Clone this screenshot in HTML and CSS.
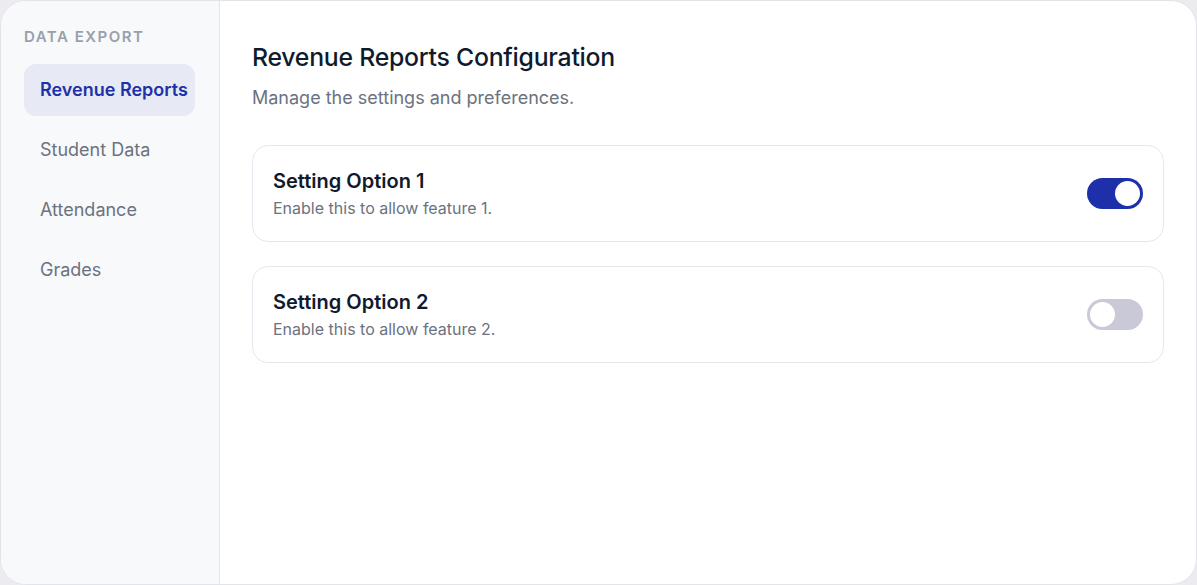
FILE: index.html
```html
<!DOCTYPE html>
<html lang="en">
<head>
<meta charset="utf-8">
<title>Revenue Reports Configuration</title>
<link rel="stylesheet" href="styles.css">
</head>
<body>
<div class="app">
  <aside class="sidebar">
    <div class="section-label">Data Export</div>
    <nav class="nav">
      <a class="nav-item active">Revenue Reports</a>
      <a class="nav-item">Student Data</a>
      <a class="nav-item">Attendance</a>
      <a class="nav-item">Grades</a>
    </nav>
  </aside>
  <main class="main">
    <h1 class="title">Revenue Reports Configuration</h1>
    <p class="subtitle">Manage the settings and preferences.</p>
    <div class="cards">
      <div class="card">
        <div class="card-text">
          <div class="card-title">Setting Option 1</div>
          <div class="card-desc">Enable this to allow feature 1.</div>
        </div>
        <span class="toggle on"><span class="knob"></span></span>
      </div>
      <div class="card">
        <div class="card-text">
          <div class="card-title">Setting Option 2</div>
          <div class="card-desc">Enable this to allow feature 2.</div>
        </div>
        <span class="toggle"><span class="knob"></span></span>
      </div>
    </div>
  </main>
</div>
</body>
</html>
```
FILE: styles.css
```css
* { box-sizing: border-box; }
html, body { margin: 0; padding: 0; }
body {
  background: #ececf0;
  font-family: Inter, "Noto Sans", sans-serif;
  width: 1197px;
  height: 585px;
}
.app {
  display: flex;
  width: 1197px;
  height: 585px;
  background: #ffffff;
  border: 1px solid #e3e3ea;
  border-radius: 26px;
  overflow: hidden;
}
.sidebar {
  width: 219px;
  flex: none;
  background: #f8f9fb;
  border-right: 1px solid #e3e4ec;
  padding: 26px 24px 24px 23px;
}
.section-label {
  font-size: 15px;
  font-weight: 600;
  letter-spacing: 0.1em;
  text-transform: uppercase;
  color: #9a9fab;
  line-height: 20px;
  margin-bottom: 17px;
  white-space: nowrap;
}
.nav {
  display: flex;
  flex-direction: column;
  gap: 8px;
}
.nav-item {
  display: flex;
  align-items: center;
  height: 52px;
  padding: 0 16px 1px;
  border-radius: 12px;
  font-size: 18px;
  color: #6b7280;
  cursor: pointer;
  white-space: nowrap;
}
.nav-item.active {
  background: #e7e9f5;
  color: #1e31a6;
  font-weight: 600;
}
.main {
  flex: 1;
  padding: 40px 32px 32px 32px;
}
.title {
  margin: 0;
  font-size: 24.8px;
  line-height: 32px;
  font-weight: 500;
  color: #0f1b2d;
  letter-spacing: -0.01em;
}
.subtitle {
  margin: 13px 0 0;
  font-size: 18px;
  line-height: 24px;
  color: #6b7280;
}
.cards {
  margin-top: 35px;
  display: flex;
  flex-direction: column;
  gap: 24px;
}
.card {
  display: flex;
  align-items: center;
  justify-content: space-between;
  height: 97px;
  padding: 0 20px;
  border: 1.5px solid #e6e7ee;
  border-radius: 16px;
}
.card-title {
  font-size: 20px;
  line-height: 26px;
  font-weight: 600;
  color: #111a2c;
}
.card-desc {
  margin-top: 3px;
  font-size: 16px;
  line-height: 22px;
  color: #6b7280;
}
.toggle {
  width: 56px;
  height: 31px;
  border-radius: 16px;
  background: #c9c9d8;
  display: flex;
  align-items: center;
  padding: 0 3px;
}
.toggle.on {
  background: #1d2fa9;
  justify-content: flex-end;
}
.knob {
  width: 25px;
  height: 25px;
  border-radius: 50%;
  background: #ffffff;
}
```
